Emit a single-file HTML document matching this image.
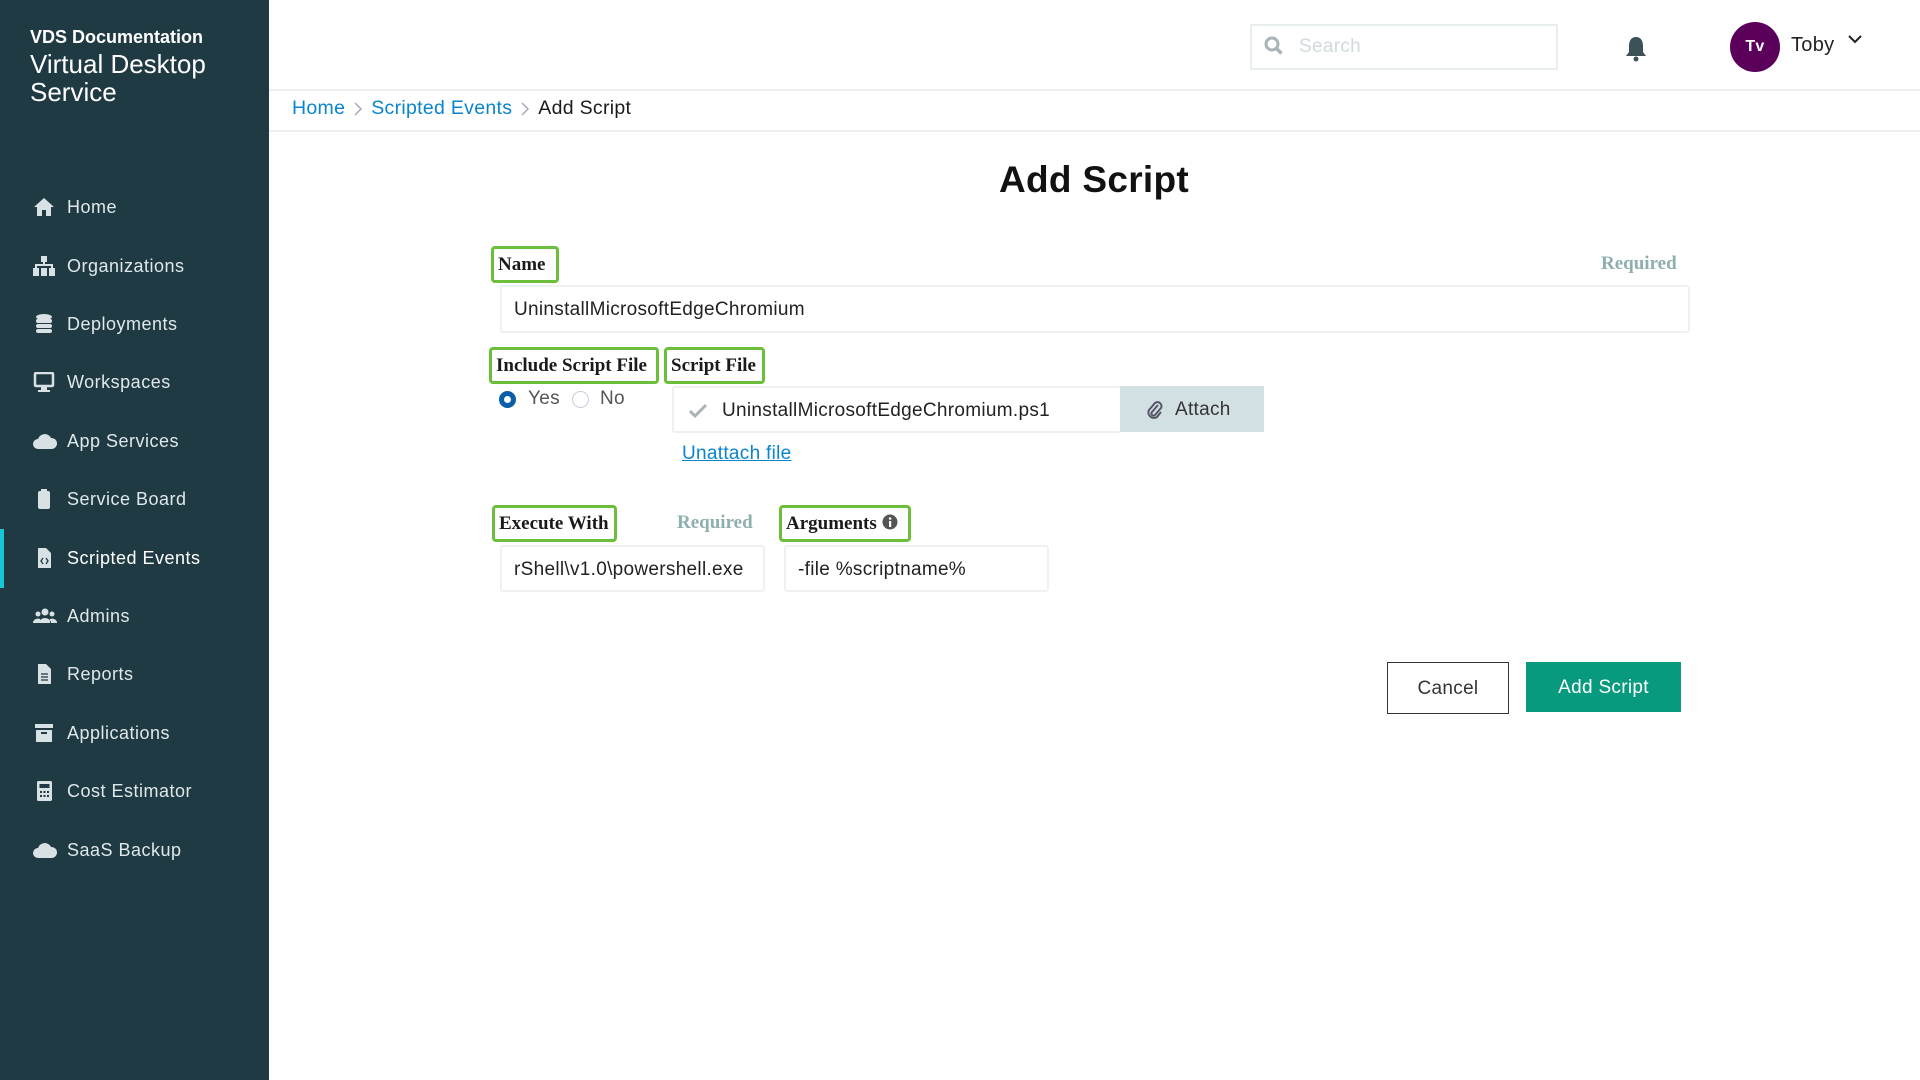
<!DOCTYPE html>
<html><head><meta charset="utf-8"><style>
*{margin:0;padding:0;box-sizing:border-box}
body{width:1920px;height:1080px;position:relative;background:#fff;font-family:"Liberation Sans",sans-serif;overflow:hidden;color:#222;letter-spacing:0.3px}
.a{position:absolute}
#sb{left:0;top:0;width:269px;height:1080px;background:#1f3a42}
.nav{position:absolute;left:0;width:269px;height:58px;color:#dfe8ea;font-size:18px;line-height:58px;letter-spacing:0.5px}
.nav span{position:absolute;left:67px}
.nav svg{position:absolute;left:33px;top:19px}
.lbl{position:absolute;border:3px solid #6cbf3a;border-radius:4px;font-family:"Liberation Serif",serif;font-weight:bold;font-size:19px;color:#1a1a1a;padding:0 4px;line-height:32px;height:37px;white-space:nowrap;letter-spacing:0}
.req{position:absolute;font-family:"Liberation Serif",serif;font-weight:bold;font-size:19px;color:#8faeae;letter-spacing:0}
.inp{position:absolute;border:2px solid #eef1f3;border-radius:3px;font-size:19px;color:#222;padding-left:12px;display:flex;align-items:center;white-space:nowrap;overflow:hidden}
</style></head><body>
<div id="sb" class="a">
<div class="a" style="left:30px;top:27px;color:#fff;font-weight:bold;font-size:18px;letter-spacing:0">VDS Documentation</div>
<div class="a" style="left:30px;top:50px;color:#fff;font-size:26px;line-height:28px;letter-spacing:0">Virtual Desktop<br>Service</div>
<div class="a" style="left:0;top:529px;width:4px;height:59px;background:#16c6d6"></div>
<div class="nav" style="top:178px"><svg width="22" height="20" viewBox="0 0 22 20"><path d="M11 1L1 10h3v9h5v-6h4v6h5v-9h3z" fill="#d8e2e4"/></svg><span>Home</span></div>
<div class="nav" style="top:237px"><svg width="22" height="20" viewBox="0 0 22 20"><rect x="8" y="0" width="6" height="6" fill="#d8e2e4"/><rect x="0" y="12" width="6" height="8" fill="#d8e2e4"/><rect x="8" y="12" width="6" height="8" fill="#d8e2e4"/><rect x="16" y="12" width="6" height="8" fill="#d8e2e4"/><path d="M11 6v4M3 12V9h16v3" stroke="#d8e2e4" stroke-width="2" fill="none"/></svg><span>Organizations</span></div>
<div class="nav" style="top:295px"><svg width="22" height="20" viewBox="0 0 22 20"><ellipse cx="11" cy="3" rx="8" ry="3" fill="#d8e2e4"/><rect x="3" y="5" width="16" height="4" rx="2" fill="#d8e2e4"/><rect x="3" y="10" width="16" height="4" rx="2" fill="#d8e2e4"/><rect x="3" y="15" width="16" height="4" rx="2" fill="#d8e2e4"/></svg><span>Deployments</span></div>
<div class="nav" style="top:353px"><svg width="22" height="20" viewBox="0 0 22 20"><rect x="2" y="1" width="18" height="13" rx="1" fill="none" stroke="#d8e2e4" stroke-width="2.5"/><rect x="8" y="15" width="6" height="3" fill="#d8e2e4"/><rect x="5" y="18" width="12" height="2" fill="#d8e2e4"/></svg><span>Workspaces</span></div>
<div class="nav" style="top:412px"><svg width="24" height="20" viewBox="0 0 24 20"><path d="M5 18a5 5 0 0 1 0-10 7 7 0 0 1 13-1 5.5 5.5 0 0 1 1 11z" fill="#d8e2e4"/></svg><span>App Services</span></div>
<div class="nav" style="top:470px"><svg width="22" height="20" viewBox="0 0 22 20"><rect x="5" y="2" width="12" height="18" rx="2" fill="#d8e2e4"/><rect x="8" y="0" width="6" height="4" fill="#d8e2e4"/></svg><span>Service Board</span></div>
<div class="nav" style="top:529px;color:#fff"><svg width="22" height="20" viewBox="0 0 22 20"><path d="M5 0h8l5 5v15H5z" fill="#d8e2e4"/><path d="M10 10l-2 3 2 3M13 10l2 3-2 3" stroke="#1f3a42" stroke-width="1.3" fill="none"/></svg><span>Scripted Events</span></div>
<div class="nav" style="top:587px"><svg width="24" height="20" viewBox="0 0 24 20"><circle cx="12" cy="6" r="3.5" fill="#d8e2e4"/><circle cx="5" cy="8" r="2.5" fill="#d8e2e4"/><circle cx="19" cy="8" r="2.5" fill="#d8e2e4"/><path d="M6 17a6 5 0 0 1 12 0zM0 17a5 4 0 0 1 7-4v4zM24 17a5 4 0 0 0-7-4v4z" fill="#d8e2e4"/></svg><span>Admins</span></div>
<div class="nav" style="top:645px"><svg width="22" height="20" viewBox="0 0 22 20"><path d="M5 0h8l5 5v15H5z" fill="#d8e2e4"/><path d="M8 10h7M8 13h7M8 16h7" stroke="#1f3a42" stroke-width="1.2"/></svg><span>Reports</span></div>
<div class="nav" style="top:704px"><svg width="22" height="20" viewBox="0 0 22 20"><rect x="2" y="1" width="18" height="4" fill="#d8e2e4"/><rect x="3" y="7" width="16" height="12" fill="#d8e2e4"/><rect x="8" y="9" width="6" height="2" fill="#1f3a42"/></svg><span>Applications</span></div>
<div class="nav" style="top:762px"><svg width="22" height="20" viewBox="0 0 22 20"><rect x="4" y="0" width="15" height="20" rx="1.5" fill="#d8e2e4"/><rect x="6.5" y="3" width="10" height="4" fill="#1f3a42"/><path d="M7 10h2v2H7zM10.5 10h2v2h-2zM14 10h2v2h-2zM7 14h2v2H7zM10.5 14h2v2h-2zM14 14h2v2h-2z" fill="#1f3a42"/></svg><span>Cost Estimator</span></div>
<div class="nav" style="top:821px"><svg width="24" height="20" viewBox="0 0 24 20"><path d="M5 18a5 5 0 0 1 0-10 7 7 0 0 1 13-1 5.5 5.5 0 0 1 1 11z" fill="#d8e2e4"/></svg><span>SaaS Backup</span></div>
</div>

<div class="a" style="left:269px;top:89px;width:1651px;height:2px;background:#eceeef"></div>
<div class="a" style="left:269px;top:130px;width:1651px;height:2px;background:#eceeef"></div>
<div class="a" style="left:1250px;top:24px;width:308px;height:46px;border:2px solid #e8eef0"></div>
<svg class="a" style="left:1264px;top:36px" width="20" height="20" viewBox="0 0 20 20"><circle cx="8" cy="8" r="6" fill="none" stroke="#a9b4b6" stroke-width="3"/><path d="M12.5 12.5l5 5" stroke="#a9b4b6" stroke-width="3.5"/></svg>
<div class="a" style="left:1299px;top:36px;font-size:19px;color:#d0dadd">Search</div>
<svg class="a" style="left:1624px;top:35px" width="24" height="28" viewBox="0 0 24 28"><path d="M12 2c-5 0-7 4-7 9v6l-3 4h20l-3-4v-6c0-5-2-9-7-9z" fill="#3b5257"/><circle cx="12" cy="24" r="2.5" fill="#3b5257"/></svg>
<div class="a" style="left:1730px;top:22px;width:50px;height:50px;border-radius:50%;background:#5b005a;color:#fff;font-weight:bold;font-size:16px;line-height:50px;text-align:center">Tv</div>
<div class="a" style="left:1791px;top:34px;font-size:20px;color:#222">Toby</div>
<svg class="a" style="left:1848px;top:35px" width="14" height="10" viewBox="0 0 14 10"><path d="M1 1l6 6 6-6" stroke="#222" stroke-width="2" fill="none"/></svg>

<div class="a" style="left:292px;top:97px;font-size:19.5px;white-space:nowrap;display:flex;align-items:center"><span style="color:#0a84cc">Home</span><svg width="26" height="16" viewBox="0 0 26 16"><path d="M10 2l6 6-6 6" stroke="#aab" stroke-width="1.5" fill="none"/></svg><span style="color:#0a84cc">Scripted Events</span><svg width="26" height="16" viewBox="0 0 26 16"><path d="M10 2l6 6-6 6" stroke="#aab" stroke-width="1.5" fill="none"/></svg><span style="color:#1a1a1a">Add Script</span></div>

<div class="a" style="left:894px;top:159px;width:400px;text-align:center;font-weight:bold;font-size:37px;color:#111">Add Script</div>

<div class="lbl" style="left:491px;top:246px;width:68px">Name</div>
<div class="req" style="left:1601px;top:253px">Required</div>
<div class="inp" style="left:500px;top:285px;width:1190px;height:48px;padding-top:2px">UninstallMicrosoftEdgeChromium</div>

<div class="lbl" style="left:489px;top:347px;width:170px">Include Script File</div>
<div class="lbl" style="left:664px;top:347px;width:101px">Script File</div>
<div class="a" style="left:499px;top:391px;width:17px;height:17px;border-radius:50%;border:5px solid #0a5fa8"></div>
<div class="a" style="left:528px;top:388px;font-size:19px;color:#555">Yes</div>
<div class="a" style="left:572px;top:391px;width:17px;height:17px;border-radius:50%;border:1px solid #ccd"></div>
<div class="a" style="left:600px;top:388px;font-size:19px;color:#555">No</div>
<div class="inp" style="left:672px;top:386px;width:450px;height:47px;padding-left:14px;padding-top:2px"><svg width="20" height="16" viewBox="0 0 20 16" style="margin-right:14px"><path d="M2 8l5 5L18 2" stroke="#aab4b6" stroke-width="3" fill="none"/></svg>UninstallMicrosoftEdgeChromium.ps1</div>
<div class="a" style="left:1120px;top:386px;width:144px;height:46px;background:#d2dfe3;font-size:19px;color:#333;line-height:48px"><svg class="a" style="left:27px;top:13px" width="16" height="20" viewBox="0 0 16 20"><path d="M11 6l-6 7a2 2 0 0 0 3 3l6-7a4 4 0 0 0-6-5L2 11a5.5 5.5 0 0 0 8 7l4-5" stroke="#556" stroke-width="2" fill="none"/></svg><span class="a" style="left:55px">Attach</span></div>
<div class="a" style="left:682px;top:443px;font-size:19px;color:#0a84cc;text-decoration:underline">Unattach file</div>

<div class="lbl" style="left:492px;top:505px;width:125px">Execute With</div>
<div class="req" style="left:677px;top:512px">Required</div>
<div class="lbl" style="left:779px;top:505px;width:132px">Arguments <svg width="16" height="16" viewBox="0 0 16 16" style="vertical-align:-1px"><circle cx="8" cy="8" r="7.5" fill="#555"/><rect x="7" y="7" width="2.2" height="6" fill="#fff"/><circle cx="8.1" cy="4.5" r="1.3" fill="#fff"/></svg></div>
<div class="inp" style="left:500px;top:545px;width:265px;height:47px;padding-top:2px">rShell\v1.0\powershell.exe</div>
<div class="inp" style="left:784px;top:545px;width:265px;height:47px;padding-top:2px">-file %scriptname%</div>

<div class="a" style="left:1387px;top:662px;width:122px;height:52px;border:1px solid #333;font-size:19px;color:#333;line-height:52px;text-align:center">Cancel</div>
<div class="a" style="left:1526px;top:662px;width:155px;height:50px;background:#079a7e;font-size:19px;color:#fff;line-height:52px;text-align:center">Add Script</div>
</body></html>
